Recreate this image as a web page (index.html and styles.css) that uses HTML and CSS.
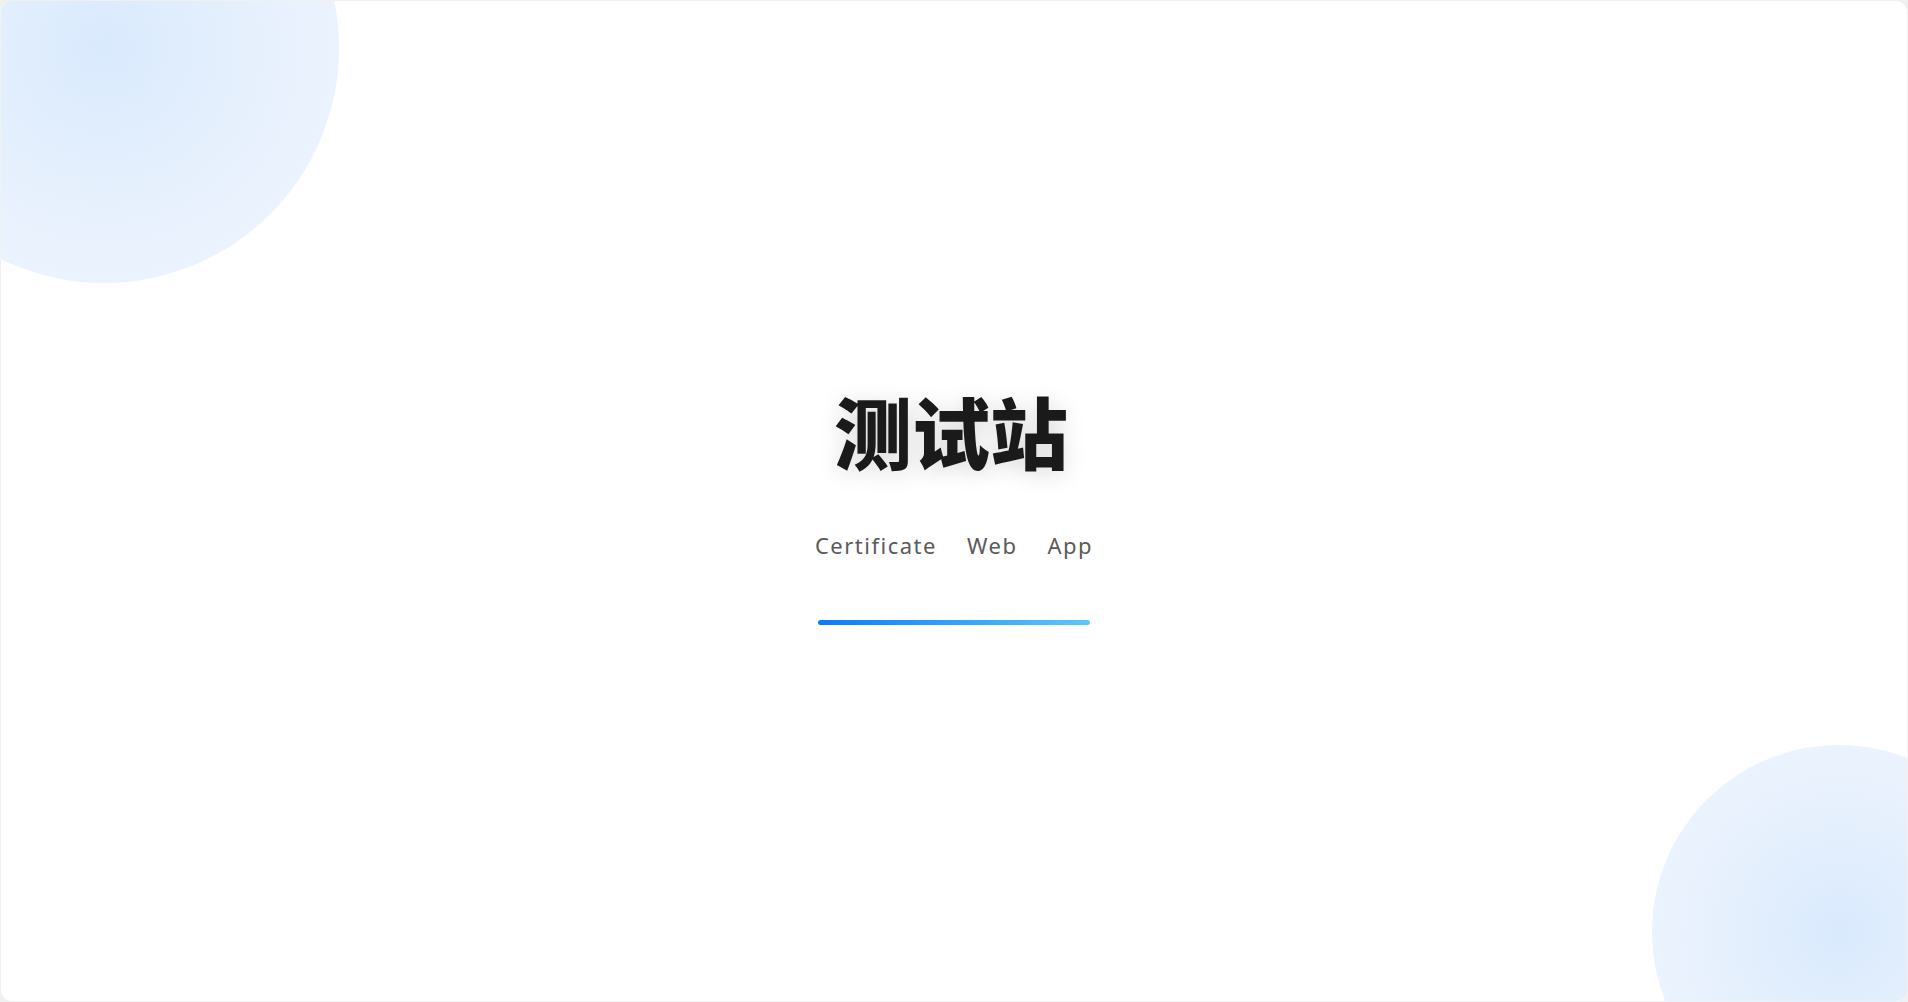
FILE: index.html
```html
<!DOCTYPE html>
<html lang="zh">
<head>
<meta charset="utf-8">
<title>测试站</title>
<link rel="stylesheet" href="styles.css">
</head>
<body>
<div class="frame">
  <div class="blob blob-tl"></div>
  <div class="blob blob-br"></div>
  <main class="hero">
    <h1 class="title">测试站</h1>
    <div class="tags">
      <span class="tag">Certificate</span>
      <span class="tag">Web</span>
      <span class="tag">App</span>
    </div>
    <div class="bar"></div>
  </main>
</div>
</body>
</html>
```

FILE: styles.css
```css
html, body {
  margin: 0;
  padding: 0;
  height: 100%;
}
body {
  background: #f0f0f0;
  font-family: "Noto Sans", "Noto Sans CJK SC", sans-serif;
}
.frame {
  position: relative;
  height: 100%;
  box-sizing: border-box;
  background: #ffffff;
  border-radius: 12px;
  border: 1px solid #f1f1f1;
  overflow: hidden;
}
.blob {
  position: absolute;
  border-radius: 50%;
  background: radial-gradient(circle, #d9eafd 0%, #e6f0fd 45%, #f1f6fe 100%);
}
.blob-tl {
  width: 470px;
  height: 470px;
  left: -132px;
  top: -188px;
}
.blob-br {
  width: 374px;
  height: 374px;
  right: -119px;
  bottom: -118px;
}
.hero {
  position: relative;
  height: 100%;
  box-sizing: border-box;
  padding-top: 14px;
  display: flex;
  flex-direction: column;
  align-items: center;
  justify-content: center;
}
.title {
  margin: 0 6px 0 0;
  font-family: "Noto Sans CJK SC", sans-serif;
  font-weight: 900;
  font-size: 78px;
  line-height: 1;
  color: #1a1a1a;
  text-shadow: 0 4px 22px rgba(0, 0, 0, 0.15);
}
.tags {
  margin-top: 60px;
  display: flex;
  gap: 30px;
  font-size: 22px;
  line-height: 33px;
  letter-spacing: 1.5px;
  color: #5a5a5a;
}
.bar {
  margin-top: 58px;
  width: 272px;
  height: 5px;
  border-radius: 3px;
  background: linear-gradient(90deg, #0a7bff 0%, #5ac8fa 100%);
}
```
